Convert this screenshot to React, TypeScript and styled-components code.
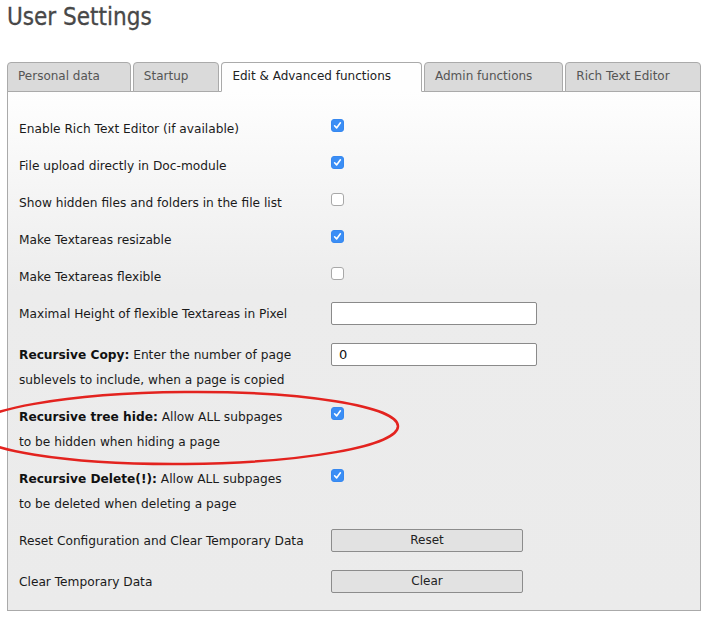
import React from "react";
import styled, { createGlobalStyle } from "styled-components";

const Global = createGlobalStyle`
  html, body { margin: 0; padding: 0; background: #fff; }
  body { font-family: "DejaVu Sans", Verdana, sans-serif; }
`;

const Page = styled.div`
  width: 708px;
  height: 621px;
  padding: 0 7px 0 7px;
  box-sizing: border-box;
  position: relative;
  overflow: hidden;
`;

const Title = styled.h1`
  margin: 0;
  padding-top: 2px;
  height: 62px;
  box-sizing: border-box;
  font-family: "DejaVu Sans Condensed", "DejaVu Sans", sans-serif;
  font-weight: normal;
  font-size: 24px;
  line-height: 30px;
  color: #484848;
  -webkit-text-stroke: 0.3px #484848;
`;

const TabBar = styled.div`
  display: flex;
  gap: 2px;
  height: 30px;
  position: relative;
  z-index: 1;
`;

const Tab = styled.div<{ $active?: boolean }>`
  height: 30px;
  box-sizing: border-box;
  padding: 0 30px 0 10px;
  border: 1px solid #aaa;
  border-bottom: ${(p) => (p.$active ? "1px solid #fefefe" : "1px solid #aaa")};
  border-radius: 4px 4px 0 0;
  background: ${(p) => (p.$active ? "#fefefe" : "#dadada")};
  color: ${(p) => (p.$active ? "#222" : "#555")};
  font-size: 12px;
  line-height: 27px;
  white-space: nowrap;
`;

const Panel = styled.div`
  margin-top: -1px;
  width: 694px;
  height: 520px;
  box-sizing: border-box;
  border: 1px solid #aaa;
  background: linear-gradient(#fefefe 0px, #ececec 200px, #ebebeb 100%);
  padding: 18.5px 0 0 11px;
`;

const Row = styled.div<{ $tall?: boolean }>`
  display: grid;
  grid-template-columns: 312px 1fr;
  align-items: start;
  padding: 6px 0 ${(p) => (p.$tall ? 10 : 6)}px;
`;

const Label = styled.div`
  font-size: 12.2px;
  line-height: 25px;
  color: #1a1a1a;
  b { font-weight: bold; color: #111; }
`;

const Check = styled.span<{ $on?: boolean }>`
  margin-top: 2px;
  width: 13px;
  height: 13px;
  box-sizing: border-box;
  border-radius: 3px;
  background: ${(p) => (p.$on ? "#3b8ef5" : "#fff")};
  border: 1px solid ${(p) => (p.$on ? "#3688f0" : "#a8a8a8")};
  display: flex;
  align-items: center;
  justify-content: center;
`;

const Input = styled.div`
  width: 206px;
  height: 23px;
  box-sizing: border-box;
  border: 1px solid #8a8a8a;
  border-radius: 2px;
  background: #fff;
  font-size: 13px;
  line-height: 21px;
  padding-left: 7px;
  color: #111;
`;

const Button = styled.div`
  width: 192px;
  height: 23px;
  box-sizing: border-box;
  border: 1px solid #8c8c8c;
  border-radius: 2px;
  background: #e2e2e2;
  font-size: 12px;
  line-height: 21px;
  text-align: center;
  color: #222;
`;

const Ellipse = styled.svg`
  position: absolute;
  left: 0;
  top: 380px;
  pointer-events: none;
`;

const Tick = () => (
  <svg width="9" height="9" viewBox="0 0 9 9">
    <path d="M1.6 4.8 L3.6 6.9 L7.4 1.8" fill="none" stroke="#fff" strokeWidth="1.6" strokeLinecap="round" strokeLinejoin="round" />
  </svg>
);

const Box = ({ on }: { on?: boolean }) => <Check $on={on}>{on && <Tick />}</Check>;

export default function App() {
  return (
    <Page>
      <Global />
      <Title>User Settings</Title>
      <TabBar>
        <Tab>Personal data</Tab>
        <Tab>Startup</Tab>
        <Tab $active>Edit &amp; Advanced functions</Tab>
        <Tab>Admin functions</Tab>
        <Tab>Rich Text Editor</Tab>
      </TabBar>
      <Panel>
        <Row>
          <Label>Enable Rich Text Editor (if available)</Label>
          <Box on />
        </Row>
        <Row>
          <Label>File upload directly in Doc-module</Label>
          <Box on />
        </Row>
        <Row>
          <Label>Show hidden files and folders in the file list</Label>
          <Box />
        </Row>
        <Row>
          <Label>Make Textareas resizable</Label>
          <Box on />
        </Row>
        <Row>
          <Label>Make Textareas flexible</Label>
          <Box />
        </Row>
        <Row $tall>
          <Label>Maximal Height of flexible Textareas in Pixel</Label>
          <Input />
        </Row>
        <Row>
          <Label>
            <b>Recursive Copy:</b> Enter the number of page
            <br />
            sublevels to include, when a page is copied
          </Label>
          <Input>0</Input>
        </Row>
        <Row>
          <Label>
            <b>Recursive tree hide:</b> Allow ALL subpages
            <br />
            to be hidden when hiding a page
          </Label>
          <Box on />
        </Row>
        <Row>
          <Label>
            <b>Recursive Delete(!):</b> Allow ALL subpages
            <br />
            to be deleted when deleting a page
          </Label>
          <Box on />
        </Row>
        <Row $tall>
          <Label>Reset Configuration and Clear Temporary Data</Label>
          <Button>Reset</Button>
        </Row>
        <Row>
          <Label>Clear Temporary Data</Label>
          <Button>Clear</Button>
        </Row>
      </Panel>
      <Ellipse width="420" height="100" viewBox="0 380 420 100">
        <ellipse cx="185" cy="428" rx="213" ry="36" fill="none" stroke="#e3231f" strokeWidth="2.5" transform="rotate(-0.5 185 428)" />
      </Ellipse>
    </Page>
  );
}
